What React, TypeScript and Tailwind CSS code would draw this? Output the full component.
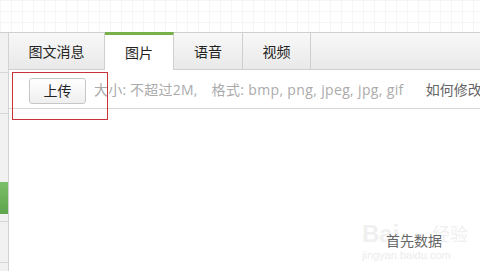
import React from "react";

export default function App() {
  const font = { fontFamily: '"Noto Sans CJK SC", "Microsoft YaHei", sans-serif' };
  const mixed = { fontFamily: '"Open Sans", "Noto Sans CJK SC", sans-serif' };
  return (
    <div className="relative w-[480px] h-[271px] overflow-hidden bg-white flex flex-col" style={font}>
      {/* dotted grid top */}
      <div className="h-[32px] shrink-0 bg-white bg-[linear-gradient(to_right,#f5f5f5_1px,transparent_1px),linear-gradient(to_bottom,#f5f5f5_1px,transparent_1px)] bg-[size:11px_11px]" />
      <div className="flex flex-1 border-t border-[#cfcfcf]">
        {/* sidebar */}
        <div className="w-[9px] shrink-0 bg-[#f1f1f1] border-r border-[#d2d2d2] flex flex-col">
          <div className="h-[40px] border-b border-[#d6d6d6]" />
          <div className="h-[41px] border-b border-[#d6d6d6]" />
          <div className="h-[68px]" />
          <div className="h-[32px] bg-[linear-gradient(to_bottom,#7cbf6a,#5ea54c)]" />
          <div className="h-[8px] border-b border-[#d6d6d6]" />
          <div className="h-[41px] border-b border-[#d6d6d6]" />
        </div>
        {/* main */}
        <div className="flex-1 flex flex-col">
          <div className="h-[37px] flex bg-[linear-gradient(to_bottom,#f8f8f8,#e9e9e9)] border-b border-[#d0d0d0]">
            <div className="w-[96px] border-r border-[#cfcfcf] flex items-center justify-center text-[14px] text-[#222]">图文消息</div>
            <div className="w-[69px] -mb-px bg-white border-t-[3px] border-t-[#78b04a] border-r border-[#cfcfcf] flex items-center justify-center text-[14px] text-[#222] -mt-px">图片</div>
            <div className="w-[69px] border-r border-[#cfcfcf] flex items-center justify-center text-[14px] text-[#222]">语音</div>
            <div className="w-[68px] border-r border-[#cfcfcf] flex items-center justify-center text-[14px] text-[#222]">视频</div>
            <div className="flex-1" />
          </div>
          <div className="h-[39px] flex items-center border-b border-[#d6d6d6] bg-white">
            <div className="ml-[20px] mt-[3px] w-[57px] h-[26px] shrink-0 rounded-[3px] border border-[#c6c6c6] bg-[linear-gradient(to_bottom,#ffffff,#efefef)] flex items-center justify-center text-[14px] text-[#222]">上传</div>
            <div className="ml-[8px] text-[14px] text-[#ababab] whitespace-nowrap tracking-[0.2px]" style={mixed}>大小: 不超过2M,</div>
            <div className="ml-[14px] text-[14px] text-[#ababab] whitespace-nowrap tracking-[0.35px]" style={mixed}>格式: bmp, png, jpeg, jpg, gif</div>
            <div className="ml-[22px] text-[14px] text-[#666] whitespace-nowrap">如何修改</div>
          </div>
          <div className="flex-1 bg-white" />
        </div>
      </div>
      {/* red highlight box */}
      <div className="absolute left-[12px] top-[72px] w-[96px] h-[48px] border border-[#c8323a]" />
      {/* watermark */}
      <div className="absolute left-[362px] top-[222px] text-[24px] leading-none text-[#f0f0f0] font-bold" style={{ fontFamily: '"Liberation Sans", sans-serif' }}>Bai</div>
      <div className="absolute left-[432px] top-[224px] text-[18px] leading-none text-[#f0f0f0]">经验</div>
      <div className="absolute left-[362px] top-[250px] text-[11px] leading-none text-[#ececec]" style={{ fontFamily: '"Liberation Sans", sans-serif' }}>jingyan.baidu.com</div>
      <div className="absolute left-[386px] top-[233px] text-[14px] leading-none text-[#666]">首先数据</div>
    </div>
  );
}
